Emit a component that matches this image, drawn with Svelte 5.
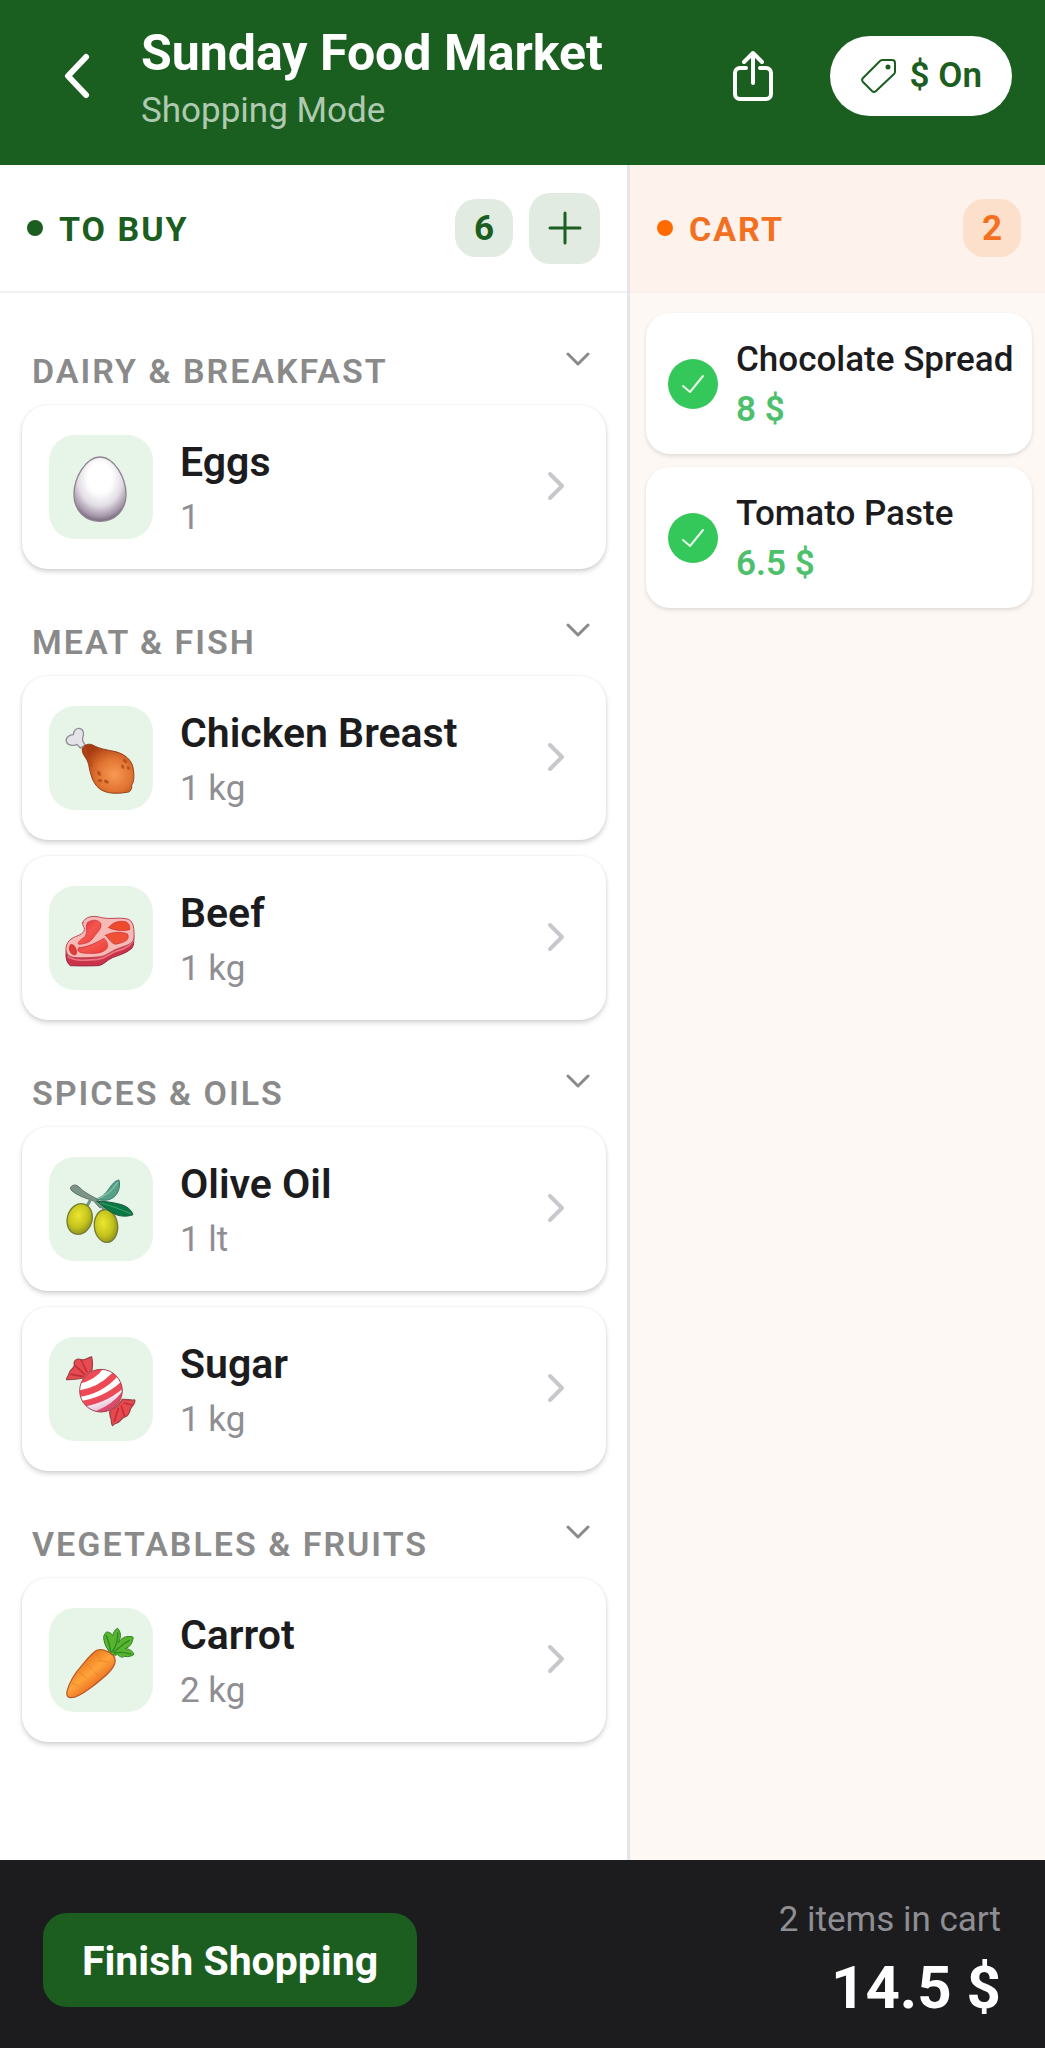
<script>
  let groups = $state([
    { name: "Dairy & Breakfast", open: true, items: [{ name: "Eggs", amount: "1", icon: "egg" }] },
    {
      name: "Meat & Fish",
      open: true,
      items: [
        { name: "Chicken Breast", amount: "1 kg", icon: "chicken" },
        { name: "Beef", amount: "1 kg", icon: "beef" }
      ]
    },
    {
      name: "Spices & Oils",
      open: true,
      items: [
        { name: "Olive Oil", amount: "1 lt", icon: "olive" },
        { name: "Sugar", amount: "1 kg", icon: "candy" }
      ]
    },
    { name: "Vegetables & Fruits", open: true, items: [{ name: "Carrot", amount: "2 kg", icon: "carrot" }] }
  ]);

  let cart = $state([
    { name: "Chocolate Spread", price: 8 },
    { name: "Tomato Paste", price: 6.5 }
  ]);

  let showPrices = $state(true);

  let toBuyCount = $derived(groups.reduce((n, g) => n + g.items.length, 0));
  let total = $derived(cart.reduce((sum, i) => sum + i.price, 0));
</script>

{#snippet foodIcon(icon)}
  {#if icon === "egg"}
    <svg class="food" viewBox="0 0 312 312" aria-hidden="true">
      <defs>
        <radialGradient id="egg-fill" cx="0.5" cy="0.33" r="0.66">
          <stop offset="0.35" stop-color="#fff" />
          <stop offset="0.65" stop-color="#e3dee5" />
          <stop offset="0.9" stop-color="#a597a9" />
          <stop offset="1" stop-color="#7d6e82" />
        </radialGradient>
      </defs>
      <path d="M153 66c42 0 78 62 78 112 0 49-34 81-78 81s-78-32-78-81c0-50 36-112 78-112z" fill="url(#egg-fill)" stroke="#8c8590" stroke-width="4" />
    </svg>
  {:else if icon === "chicken"}
    <svg class="food" viewBox="28 48 312 312" aria-hidden="true">
      <defs>
        <radialGradient id="leg-fill" cx="0.62" cy="0.62" r="0.65">
          <stop offset="0" stop-color="#f79a55" />
          <stop offset="0.5" stop-color="#e27532" />
          <stop offset="1" stop-color="#a83d12" />
        </radialGradient>
      </defs>
      <path d="M122 174l-10-11c-8 6-30 3-32-9-3-12 10-20 21-20 1-12 8-20 18-19 13 2 15 17 10 28-2 8 1 14 8 22z" fill="#e3e3e8" stroke="#8e8e94" stroke-width="4" stroke-linejoin="round" />
      <path d="M128 176c5-11 18-17 31-11 18 11 40 14 64 19 34 7 55 28 58 54 3 21 2 39-5 47 2 14-6 23-16 22-27 5-62 5-82-12-20-17-26-44-31-71-5-23-22-29-19-48z" fill="url(#leg-fill)" stroke="#96401b" stroke-width="3" />
      <path d="M137 177c-2 17 13 28 18 50" fill="none" stroke="#bb4517" stroke-width="9" stroke-linecap="round" opacity="0.5" />
      <g fill="#b9531e">
        <ellipse cx="178" cy="250" rx="5" ry="8" transform="rotate(-30 178 250)" />
        <ellipse cx="181" cy="272" rx="7" ry="5" />
        <ellipse cx="200" cy="275" rx="8" ry="5" transform="rotate(35 200 275)" />
        <ellipse cx="256" cy="213" rx="8" ry="5" transform="rotate(35 256 213)" />
        <ellipse cx="249" cy="230" rx="4" ry="7" transform="rotate(-20 249 230)" />
        <ellipse cx="266" cy="234" rx="4" ry="6" transform="rotate(-30 266 234)" />
      </g>
    </svg>
  {:else if icon === "beef"}
    <svg class="food" viewBox="28 33 312 312" aria-hidden="true">
      <defs>
        <linearGradient id="meat-fill" x1="0" y1="0" x2="1" y2="1">
          <stop offset="0" stop-color="#d8293f" />
          <stop offset="0.5" stop-color="#f4564d" />
          <stop offset="1" stop-color="#e93a35" />
        </linearGradient>
      </defs>
      <path d="M80 225c-3 20 0 38 12 47 24 1 60 1 84 0 17-2 25-17 42-24 20-8 39-12 56-26 9-8 9-21 8-40z" fill="#c9344b" stroke="#9e2741" stroke-width="3" />
      <path d="M85 245c22 16 60 10 89 8 28-3 34-19 61-26 22-6 36-14 45-29" fill="none" stroke="#ee7380" stroke-width="5" />
      <path d="M129 143c7-19 32-22 53-16 27 8 59-2 84 6 16 6 18 29 17 56-2 19-28 24-49 32-24 9-33 23-60 25-30 2-73 6-87-4-14-13-9-38 7-50 19-12 37-12 40-28 2-9-8-12-5-21z" fill="#f8b9b5" stroke="#ba4756" stroke-width="3" />
      <g fill="url(#meat-fill)" stroke="#c92e3d" stroke-width="2">
        <path d="M143 144c10-12 34-11 40 1 6 14-13 30-22 43-10 15-24 18-43 20-8-2 4-14 14-20 16-10 2-32 11-44z" />
        <path d="M207 158c8-11 22-20 42-19 14 0 23 9 21 25-19 5-45 3-63-6z" fill="#ee4b2d" />
        <path d="M197 181c21-11 49-12 67-4 7 18-7 24-36 31-12-2-18-14-31-27z" fill="#ef5136" />
        <path d="M118 218c26-2 51-14 75-28 10 8 14 25 8 31-13 15-37 15-60 14-19-1-34-6-23-17z" />
        <path d="M92 210c10-5 15 6 18 15 2 9 1 15-6 15-14-3-20-22-12-30z" fill="#dd3d35" />
      </g>
    </svg>
  {:else if icon === "olive"}
    <svg class="food" viewBox="28 37 312 312" aria-hidden="true">
      <defs>
        <radialGradient id="olive-fill" cx="0.4" cy="0.4" r="0.65">
          <stop offset="0" stop-color="#ece62f" />
          <stop offset="0.6" stop-color="#c4c41d" />
          <stop offset="1" stop-color="#8f911d" />
        </radialGradient>
      </defs>
      <path d="M166 163c19-2 31-15 42-31 9-12 17-24 30-26 6 24-5 48-25 57-14 6-31 4-47 0z" fill="#55a087" stroke="#397d6c" stroke-width="3" />
      <path d="M172 163c26-9 44-22 61-49" fill="none" stroke="#84c0a8" stroke-width="4" />
      <path d="M94 127c6-9 17-7 24 0 15 16 31 23 54 36l18 23-9 4-20-22c-24-7-49-16-65-30-4-4-4-8-2-11z" fill="#7c9589" stroke="#64756c" stroke-width="3" />
      <path d="M152 166l-11 20M187 183l7 13" stroke="#6f9688" stroke-width="9" />
      <ellipse cx="120" cy="223" rx="37" ry="47" transform="rotate(17 120 223)" fill="url(#olive-fill)" stroke="#747c35" stroke-width="4" />
      <ellipse cx="199" cy="244" rx="35" ry="49" transform="rotate(-6 199 244)" fill="url(#olive-fill)" stroke="#747c35" stroke-width="4" />
      <path d="M172 170c26-1 49 4 70 9 20 6 33 16 38 31-21 8-47 5-65-7-20-12-29-23-43-33z" fill="#087944" stroke="#205b43" stroke-width="3" />
      <path d="M183 175c34 9 60 19 90 32" fill="none" stroke="#42a169" stroke-width="3" />
    </svg>
  {:else if icon === "candy"}
    <svg class="food" viewBox="28 37 312 312" aria-hidden="true">
      <defs>
        <clipPath id="candy-clip"><circle cx="184" cy="198" r="64" /></clipPath>
        <linearGradient id="candy-shade" x1="0.3" y1="0" x2="0.7" y2="1">
          <stop offset="0.6" stop-color="#b44d92" stop-opacity="0" />
          <stop offset="1" stop-color="#c04693" stop-opacity="0.5" />
        </linearGradient>
      </defs>
      <path d="M156 97c-12 2-22 11-31 8-15-5-24 5-21 14 3 10-16 18-16 28-1 9-10 14-7 18 20 0 45-3 58-8l18-21c2-13 2-28-1-39z" fill="#e74b51" stroke="#9e4548" stroke-width="4" stroke-linejoin="round" />
      <path d="M212 254c17-2 27-16 36-30 12-1 27 4 37 2 4 9-8 17-12 25-4 11-4 21-16 25-12 4-13 11-20 16-7 5-11 1-18 11-7-7-1-15-6-23-2-8-5-16-1-26z" fill="#e9484f" stroke="#9e4548" stroke-width="4" stroke-linejoin="round" />
      <g fill="none" stroke="#bf2e37" stroke-width="5" stroke-linecap="round">
        <path d="M105 121l30 29M124 106l18 36M94 149l35 6M236 251l-12 38M245 244l9 29M254 235l24 6" />
      </g>
      <circle cx="184" cy="198" r="64" fill="#fff" />
      <g clip-path="url(#candy-clip)" fill="none" stroke="#ee4a55" stroke-width="19">
        <path d="M107 169q55-7 78-47M112 208q64-7 110-54M113 240q82-10 138-62M174 267q48-17 80-59" />
      </g>
      <circle cx="184" cy="198" r="64" fill="url(#candy-shade)" stroke="#a34550" stroke-width="3" />
    </svg>
  {:else}
    <svg class="food" viewBox="28 37 312 312" aria-hidden="true">
      <defs>
        <linearGradient id="carrot-fill" x1="0.25" y1="0.3" x2="0.65" y2="0.8">
          <stop offset="0" stop-color="#ed7d20" />
          <stop offset="0.45" stop-color="#ffa43b" />
          <stop offset="1" stop-color="#e8641d" />
        </linearGradient>
      </defs>
      <path d="M210 171c-6-11-16-24-17-38-3-10 0-18 8-24 8 0 15 4 18 11 3-11 8-20 15-22 8 8 10 20 7 31l-5 13c5-10 16-19 26-19 9-1 17-1 19 3-3 7-3 15-8 21-4 6-11 10-17 12 12-1 24 8 27 17-7 6-18 8-28 6-9 6-17-1-22-6-5 5-13 3-23-5z" fill="#58b52d" stroke="#33812a" stroke-width="3" stroke-linejoin="round" />
      <path d="M212 170c1-23-8-35-12-50M216 169c16-19 19-38 18-58M222 169c15-9 26-24 47-35M225 172c15-3 32-2 48 3" fill="none" stroke="#2f8829" stroke-width="4" />
      <path d="M170 165c8-4 18-4 27 0 11 3 19 9 26 17 6 10 4 20-2 31-13 23-39 40-60 57-22 16-44 35-67 36-11 1-14-9-12-18 7-29 25-57 45-79 16-19 28-35 43-44z" fill="url(#carrot-fill)" stroke="#bd5c28" stroke-width="4" />
      <path d="M164 173c8 4 14 8 18 15M138 201l20 22M114 228c11 4 16 9 21 16M99 263l14 6M207 201c-12-5-19-4-29-6M179 240l-12-10" fill="none" stroke="#e98429" stroke-width="3" stroke-linecap="round" />
    </svg>
  {/if}
{/snippet}

<div class="app">
  <header class="topbar">
    <button class="icon-btn back" aria-label="Back">
      <svg width="30" height="48" viewBox="0 0 30 48"><path d="M25 5L7 24l18 19" /></svg>
    </button>
    <div class="heading">
      <h1>Sunday Food Market</h1>
      <p>Shopping Mode</p>
    </div>
    <button class="icon-btn share" aria-label="Share">
      <svg width="42" height="52" viewBox="0 0 42 52">
        <path d="M14 18H8a5 5 0 0 0-5 5v21a5 5 0 0 0 5 5h26a5 5 0 0 0 5-5V23a5 5 0 0 0-5-5h-6M21 33V3M12 12l9-9 9 9" />
      </svg>
    </button>
    <button class="price-toggle" aria-pressed={showPrices} onclick={() => (showPrices = !showPrices)}>
      <svg width="36" height="36" viewBox="0 0 36 36" aria-hidden="true">
        <path d="M22 2h10a3 3 0 0 1 3 3v9a3 3 0 0 1-1 2L16 33a3 3 0 0 1-4 0l-9-9a3 3 0 0 1 0-4L20 3a3 3 0 0 1 2-1z" />
        <circle cx="28" cy="9" r="1.5" />
      </svg>
      <span>$ {showPrices ? "On" : "Off"}</span>
    </button>
  </header>

  <main class="columns">
    <section class="to-buy">
      <div class="col-head">
        <span class="dot"></span>
        <h2>TO BUY</h2>
        <span class="count">{toBuyCount}</span>
        <button class="add" aria-label="Add item">
          <svg width="34" height="34" viewBox="0 0 34 34"><path d="M17 2v30M2 17h30" /></svg>
        </button>
      </div>
      <div class="groups">
        {#each groups as group}
          <div class="group">
            <button class="group-head" aria-expanded={group.open} onclick={() => (group.open = !group.open)}>
              <span>{group.name}</span>
              <svg class:closed={!group.open} width="24" height="16" viewBox="0 0 24 16" aria-hidden="true"><path d="M2 3l10 10L22 3" /></svg>
            </button>
            {#if group.open}
              <ul class="items">
                {#each group.items as item}
                  <li>
                    <button class="item">
                      <span class="tile">{@render foodIcon(item.icon)}</span>
                      <span class="info">
                        <span class="name">{item.name}</span>
                        <span class="amount">{item.amount}</span>
                      </span>
                      <svg class="chevron" width="20" height="32" viewBox="0 0 20 32" aria-hidden="true"><path d="M4 3l12 12L4 27" /></svg>
                    </button>
                  </li>
                {/each}
              </ul>
            {/if}
          </div>
        {/each}
      </div>
    </section>

    <section class="cart">
      <div class="col-head">
        <span class="dot"></span>
        <h2>CART</h2>
        <span class="count">{cart.length}</span>
      </div>
      <ul class="cart-items">
        {#each cart as item}
          <li class="cart-item">
            <span class="check">
              <svg width="24" height="20" viewBox="0 0 24 20" aria-hidden="true"><path d="M2 12l7 6L22 2" /></svg>
            </span>
            <div class="cart-info">
              <span class="cart-name">{item.name}</span>
              {#if showPrices}<span class="price">{item.price} $</span>{/if}
            </div>
          </li>
        {/each}
      </ul>
    </section>
  </main>

  <footer class="bottombar">
    <button class="finish">Finish Shopping</button>
    <div class="summary">
      <span class="summary-label">{cart.length} items in cart</span>
      <span class="total">{total} $</span>
    </div>
  </footer>
</div>

<style>
  :global(body) { margin: 0; background: #fff; }
  .app {
    display: flex;
    flex-direction: column;
    min-height: 100vh;
    font-family: Roboto, "Liberation Sans", sans-serif;
    font-size: 35px;
    line-height: 44px;
    color: #1c1c1e;
  }
  h1, h2, p, ul { margin: 0; padding: 0; }
  ul { list-style: none; }
  button {
    font: inherit;
    color: inherit;
    background: none;
    border: none;
    margin: 0;
    padding: 0;
    cursor: pointer;
  }
  svg {
    display: block;
    flex: none;
    fill: none;
    stroke: currentColor;
    stroke-linecap: round;
    stroke-linejoin: round;
  }

  .topbar {
    display: flex;
    align-items: center;
    background: #1a5f1f;
    color: #fff;
    padding: 18px 33px 32px 57px;
  }
  .icon-btn { flex: none; }
  .back { padding: 0 50px 0 4px; }
  .back svg { stroke-width: 6; }
  .heading { flex: 1; min-width: 0; padding-top: 7px; }
  h1 { font-size: 50px; line-height: 56px; font-weight: 700; margin-bottom: 8px; }
  .heading p { color: #b0cab2; }
  .share { margin-right: 56px; }
  .share svg { stroke-width: 4; }
  .price-toggle {
    display: flex;
    align-items: center;
    gap: 14px;
    height: 80px;
    padding: 0 30px;
    border-radius: 40px;
    background: #fff;
    color: #1b5e20;
    font-weight: 600;
  }
  .price-toggle svg { stroke-width: 2; }
  .price-toggle circle { fill: currentColor; }

  .columns { flex: 1; display: grid; grid-template-columns: 3fr 2fr; }
  .to-buy, .cart { min-width: 0; }
  .cart { background: #fdf8f4; border-left: 3px solid #e5e5e8; }
  .col-head {
    display: flex;
    align-items: center;
    box-sizing: border-box;
    height: 128px;
    padding: 0 27px;
    border-bottom: 2px solid #f1f1f2;
    color: #1b5e20;
  }
  .cart .col-head {
    background: #fef2ed;
    border-color: #faeeea;
    color: #f37021;
    padding-right: 24px;
  }
  .dot { width: 16px; height: 16px; border-radius: 50%; background: #1b5e20; margin-right: 16px; }
  .cart .dot { background: #ff6b00; }
  h2 { flex: 1; padding-top: 2px; font-size: 34px; font-weight: 700; letter-spacing: 2px; }
  .count {
    width: 58px;
    height: 58px;
    line-height: 60px;
    border-radius: 21px;
    background: #e1ebe2;
    text-align: center;
    font-weight: 700;
  }
  .cart .count { background: #fde0cc; }
  .add {
    display: grid;
    place-items: center;
    width: 71px;
    height: 71px;
    margin-left: 16px;
    border-radius: 21px;
    background: #e1ebe2;
  }
  .add svg { stroke-width: 3; }

  .groups { padding: 5px 21px 53px 22px; }
  .group-head {
    display: flex;
    align-items: flex-start;
    justify-content: space-between;
    width: 100%;
    padding: 53px 16px 14px 10px;
    color: #8a8a8a;
    font-size: 34px;
    line-height: 40px;
    font-weight: 600;
    letter-spacing: 2px;
    text-transform: uppercase;
  }
  .group-head svg { stroke-width: 3; }
  .group-head .closed { transform: rotate(-90deg); }
  .items { display: flex; flex-direction: column; gap: 16px; }
  .item {
    display: flex;
    align-items: center;
    gap: 27px;
    width: 100%;
    padding: 29px 40px 29px 27px;
    border-radius: 26px;
    background: #fff;
    box-shadow: 0 3px 5px rgba(0, 0, 0, 0.16), 0 0 3px rgba(0, 0, 0, 0.08);
    text-align: left;
  }
  .tile { flex: none; width: 104px; height: 104px; border-radius: 26px; background: #e7f5e9; }
  .food { width: 100%; height: 100%; stroke: none; }
  .info { flex: 1; display: flex; flex-direction: column; gap: 10px; min-width: 0; padding-top: 4px; }
  .name { font-size: 41px; line-height: 48px; font-weight: 600; }
  .amount { color: #8e8e93; }
  .chevron { color: #c7c7cc; stroke-width: 4; }

  .cart-items { display: flex; flex-direction: column; gap: 13px; padding: 20px 13px 20px 16px; }
  .cart-item {
    display: flex;
    align-items: center;
    gap: 18px;
    padding: 22px 16px 22px 22px;
    border-radius: 24px;
    background: #fff;
    box-shadow: 0 2px 4px rgba(0, 0, 0, 0.12);
  }
  .check {
    flex: none;
    display: grid;
    place-items: center;
    width: 50px;
    height: 50px;
    border-radius: 50%;
    background: #34c759;
    color: #e6f8ea;
  }
  .check svg { stroke-width: 2; }
  .cart-info { display: flex; flex-direction: column; gap: 6px; min-width: 0; padding-top: 3px; }
  .cart-name { font-weight: 500; white-space: nowrap; }
  .price { color: #4cc06b; font-weight: 600; }

  .bottombar {
    display: flex;
    align-items: center;
    justify-content: space-between;
    padding: 38px 44px 26px 43px;
    background: #1c1c1e;
    color: #fff;
  }
  .finish {
    height: 94px;
    padding: 2px 39px 0;
    border-radius: 24px;
    background: #1b5e20;
    font-size: 41px;
    font-weight: 700;
  }
  .summary { display: flex; flex-direction: column; gap: 12px; text-align: right; }
  .summary-label { color: #8e8e93; }
  .total { font-size: 60px; line-height: 68px; font-weight: 700; }
</style>
